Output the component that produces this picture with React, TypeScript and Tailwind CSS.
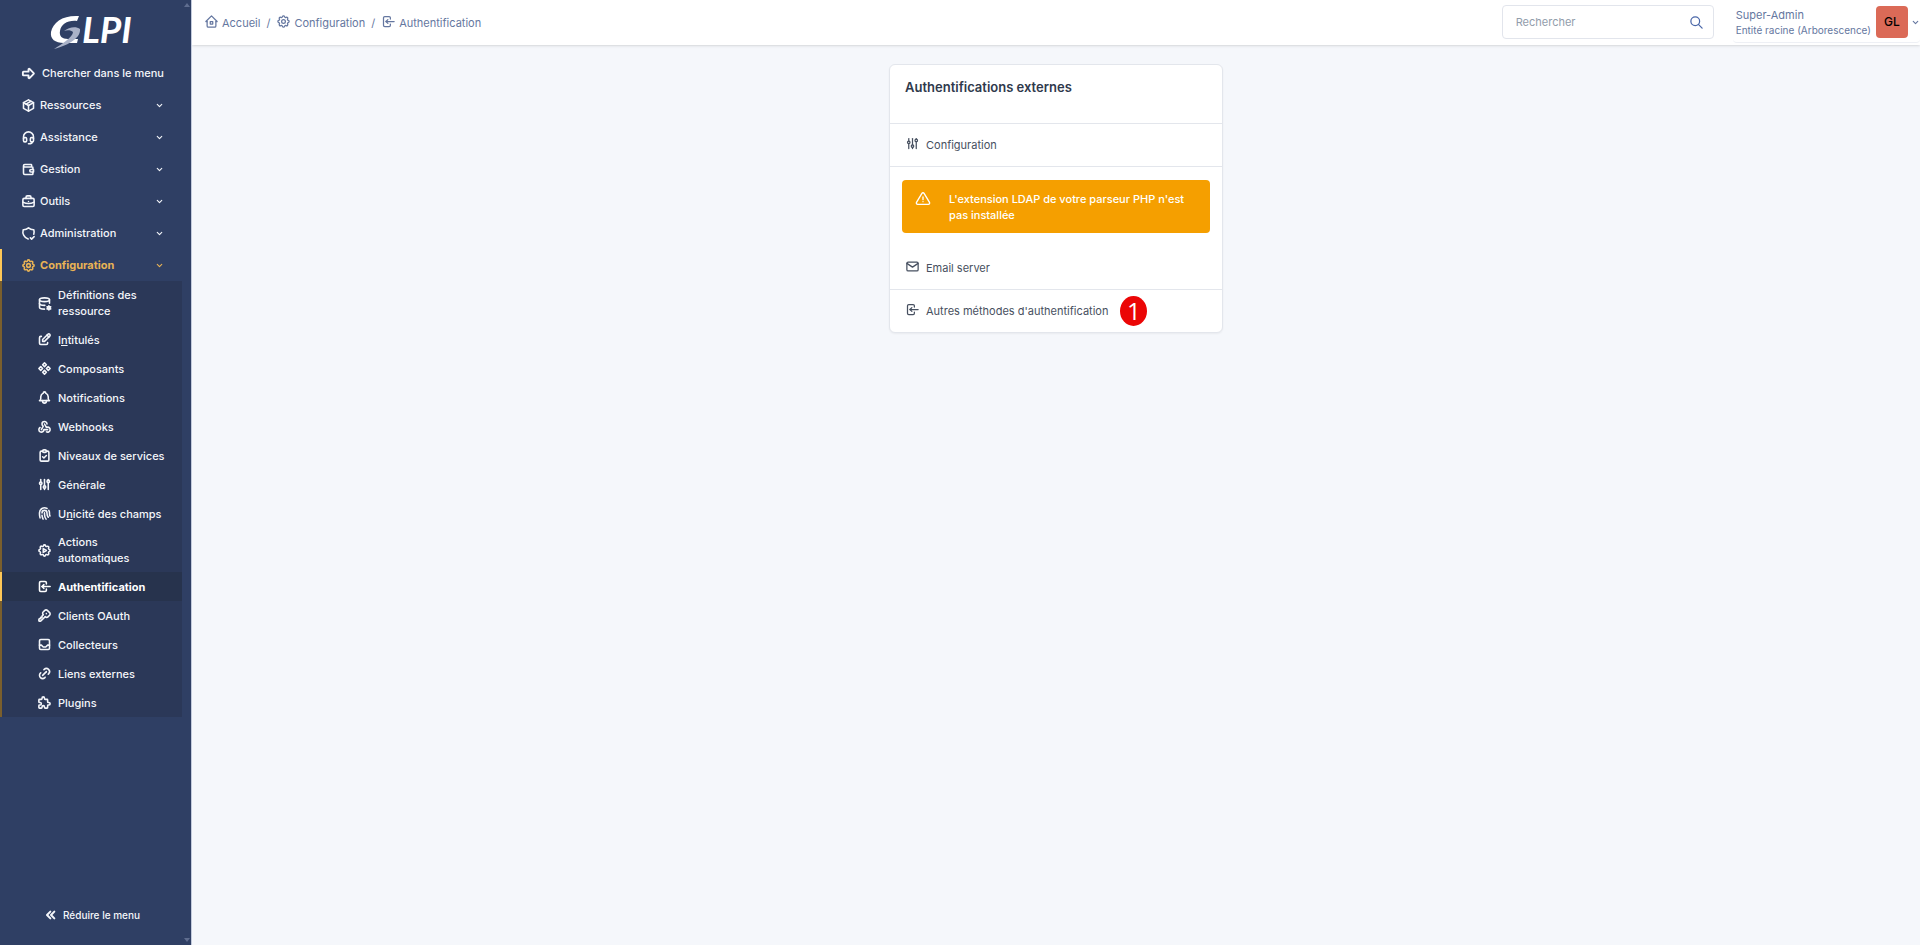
import type { IconType } from "react-icons";
import {
  TbAdjustments,
  TbAlertTriangle,
  TbArrowBigRight,
  TbBell,
  TbBriefcase,
  TbChevronDown,
  TbChevronsLeft,
  TbClipboardCheck,
  TbComponents,
  TbDatabaseCog,
  TbEdit,
  TbFingerprint,
  TbHeadset,
  TbHome2,
  TbInbox,
  TbKey,
  TbLink,
  TbLogin,
  TbMail,
  TbPackage,
  TbPuzzle,
  TbSearch,
  TbSettings,
  TbSettingsAutomation,
  TbShieldCheck,
  TbWallet,
  TbWebhook,
} from "react-icons/tb";

type Entry = {
  label: string;
  icon: IconType;
  shortcut?: number;
  active?: boolean;
};

const menu: Entry[] = [
  { label: "Ressources", icon: TbPackage },
  { label: "Assistance", icon: TbHeadset },
  { label: "Gestion", icon: TbWallet },
  { label: "Outils", icon: TbBriefcase },
  { label: "Administration", icon: TbShieldCheck },
  { label: "Configuration", icon: TbSettings, active: true },
];

const submenu: Entry[] = [
  { label: "Définitions des ressource", icon: TbDatabaseCog },
  { label: "Intitulés", icon: TbEdit, shortcut: 1 },
  { label: "Composants", icon: TbComponents },
  { label: "Notifications", icon: TbBell },
  { label: "Webhooks", icon: TbWebhook },
  { label: "Niveaux de services", icon: TbClipboardCheck },
  { label: "Générale", icon: TbAdjustments },
  { label: "Unicité des champs", icon: TbFingerprint, shortcut: 1 },
  { label: "Actions automatiques", icon: TbSettingsAutomation },
  { label: "Authentification", icon: TbLogin, active: true },
  { label: "Clients OAuth", icon: TbKey },
  { label: "Collecteurs", icon: TbInbox },
  { label: "Liens externes", icon: TbLink },
  { label: "Plugins", icon: TbPuzzle },
];

const crumbs: Entry[] = [
  { label: "Accueil", icon: TbHome2 },
  { label: "Configuration", icon: TbSettings },
  { label: "Authentification", icon: TbLogin },
];

function Label({ text, shortcut }: { text: string; shortcut?: number }) {
  if (shortcut === undefined) return <span>{text}</span>;
  return (
    <span>
      {text.slice(0, shortcut)}
      <u className="underline-offset-1">{text[shortcut]}</u>
      {text.slice(shortcut + 1)}
    </span>
  );
}

function Logo() {
  return (
    <svg viewBox="0 0 100 40" className="h-10 w-[100px]" role="img" aria-label="GLPI">
      <path d="M29 4 L27 9 C18 8 11 12 10 19 C9 24 12 27 18 27 L28 27 L27 31 L14 31 C5 31 0 27 1 20 C3 10 13 3 29 4 Z" fill="#fff" />
      <path d="M14 19 C19 15 26 14 30 17 C31 25 20 33 4 37 C12 32 23 25 23 20 C21 18 17 18 14 19 Z" fill="#aab2c8" />
      <text x="32" y="31" fill="#fff" fontFamily="Lato, sans-serif" fontSize="37" fontStyle="italic" fontWeight="700">
        LPI
      </text>
    </svg>
  );
}

function Sidebar() {
  return (
    <aside className="relative flex w-48 shrink-0 flex-col border-r border-[#c3cbdc] bg-[#2f3f64] text-[#f4f6fa]">
      <a href="#" className="ml-[50px] mt-3 w-[100px]">
        <Logo />
      </a>
      <nav className="mt-[5px] text-[11px] font-medium">
        <a href="#" className="flex h-8 items-center gap-1.5 pl-[21px]">
          <TbArrowBigRight size={15} strokeWidth={3} />
          Chercher dans le menu
        </a>
        {menu.map(({ label, icon: Icon, active }) => (
          <button
            key={label}
            type="button"
            aria-expanded={!!active}
            className={
              active
                ? "flex h-8 w-full items-center border-l-2 border-[#fdc757] pl-[19px] pr-[27px] font-bold text-[#e9b355]"
                : "flex h-8 w-full items-center border-l-2 border-transparent pl-[19px] pr-[27px]"
            }
          >
            <Icon size={15} strokeWidth={2.5} />
            <span className="ml-1">{label}</span>
            <TbChevronDown size={9} strokeWidth={3} className="ml-auto" />
          </button>
        ))}
        <ul className="mr-[9px] bg-[#2b3858]">
          {submenu.map(({ label, icon: Icon, shortcut, active }) => (
            <li key={label}>
              <a
                href="#"
                aria-current={active ? "page" : undefined}
                className={
                  active
                    ? "flex min-h-[29px] items-center gap-1.5 border-l-2 border-[#fdc757] bg-[#27334d] py-1.5 pl-[35px] pr-4 font-bold leading-4 text-white"
                    : "flex min-h-[29px] items-center gap-1.5 border-l-2 border-[#7b5f2c] py-1.5 pl-[35px] pr-4 leading-4"
                }
              >
                <Icon size={15} strokeWidth={2.5} className="shrink-0" />
                <Label text={label} shortcut={shortcut} />
              </a>
            </li>
          ))}
        </ul>
      </nav>
      <button type="button" className="mb-5 ml-[43px] mt-auto flex items-center gap-1 self-start text-[10px] font-medium leading-5">
        <TbChevronsLeft size={16} strokeWidth={3} />
        Réduire le menu
      </button>
      <span className="absolute right-px top-[3px] border-x-[3px] border-b-4 border-x-transparent border-b-[#5f6d8f]" />
      <span className="absolute bottom-[3px] right-px border-x-[3px] border-t-4 border-x-transparent border-t-[#5f6d8f]" />
    </aside>
  );
}

function TopBar() {
  return (
    <header className="flex h-[45px] items-center bg-white pl-3 text-[11px] text-[#6577a0] shadow-sm">
      <ol className="flex items-center pt-px">
        {crumbs.map(({ label, icon: Icon }, i) => (
          <li key={label} className="flex items-center">
            {i > 0 && <span className="px-1.5">/</span>}
            <a href="#" className="flex items-center gap-[3px]">
              <Icon size={15} className="mb-[3px]" />
              {label}
            </a>
          </li>
        ))}
      </ol>
      <form className="mb-px ml-auto flex h-[34px] w-[212px] items-center rounded border border-[#e2e5ec] px-[13px]">
        <input
          type="search"
          aria-label="Rechercher"
          placeholder="Rechercher"
          className="min-w-0 flex-1 outline-none placeholder:text-[#929dab]"
        />
        <button type="button" aria-label="Lancer la recherche" className="-mr-1 text-[#4a67a8]">
          <TbSearch size={15} />
        </button>
      </form>
      <button type="button" className="ml-[19px] flex h-[43px] items-center self-start rounded border-b border-[#eef0f5] pl-[3px] pt-0.5 text-left">
        <span className="mr-[5px]">
          <span className="block leading-[15px]">Super-Admin</span>
          <span className="block text-[10px] leading-[14px]">Entité racine (Arborescence)</span>
        </span>
        <span className="flex size-8 items-center justify-center rounded bg-[#db6a57] text-xs font-medium text-black">GL</span>
        <TbChevronDown size={9} strokeWidth={3} className="ml-[3px]" />
      </button>
    </header>
  );
}

function AuthCard() {
  return (
    <section className="mx-auto mt-[19px] w-[334px] rounded-md border border-[#e3e6ec] bg-white text-[11px] text-[#475060] shadow-xs">
      <h1 className="h-[58px] px-[15px] pt-[13px] text-[13px] font-semibold leading-[18px] text-[#2f394c]">Authentifications externes</h1>
      <a href="#" className="flex h-11 items-center gap-1.5 border-y border-[#e3e6ec] px-[15px]">
        <TbAdjustments size={15} className="mb-1" />
        Configuration
      </a>
      <div role="alert" className="mx-3 mb-3 mt-[13px] flex gap-[18px] rounded bg-[#f59f00] px-[13px] pb-2.5 pt-[11px] font-medium leading-4 text-white">
        <TbAlertTriangle size={16} className="shrink-0" />
        L'extension LDAP de votre parseur PHP n'est pas installée
      </div>
      <a href="#" className="flex h-11 items-center gap-1.5 px-[15px] pt-0.5">
        <TbMail size={15} className="mb-1" />
        Email server
      </a>
      <a href="#" className="flex h-[43px] items-center gap-1.5 border-t border-[#e3e6ec] px-[15px]">
        <TbLogin size={15} className="mb-1" />
        Autres méthodes d'authentification
        <span className="ml-1.5 flex h-[30px] w-[27px] items-center justify-center rounded-[50%] bg-[#eb0606] font-['Open_Sans',sans-serif] text-2xl text-white">1</span>
      </a>
    </section>
  );
}

export default function App() {
  return (
    <div className="flex min-h-screen bg-[#f5f7fb] font-['Inter',sans-serif]">
      <Sidebar />
      <div className="flex min-w-0 flex-1 flex-col">
        <TopBar />
        <main>
          <AuthCard />
        </main>
      </div>
    </div>
  );
}
